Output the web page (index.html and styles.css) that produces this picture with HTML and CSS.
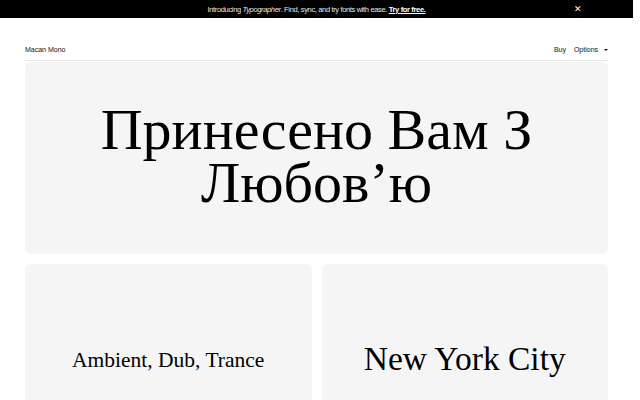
FILE: index.html
```html
<!DOCTYPE HTML>
<html>
    <head>
        <meta charset="utf-8">
        <link rel="stylesheet" href="styles.css">
    </head>
    <body>
        <div class="page">
            <div class="promo">
                <span class="promo-text">Introducing <em>Typographer</em>. Find, sync, and try fonts with ease. <a href="#">Try for free.</a></span>
                <span class="promo-close">&#x2715;</span>
            </div>
            <div class="wrap">
                <div class="topnav">
                    <span class="family">Macan Mono</span>
                    <span class="links">
                        <a href="#">Buy</a>
                        <a href="#" class="options">Options <span class="caret"></span></a>
                    </span>
                </div>
                <div class="hero">
                    <p class="hero-text"><span class="line">Принесено Вам З</span><span class="line">Любов’ю</span></p>
                </div>
                <div class="grid">
                    <div class="card"><p class="sample small">Ambient, Dub, Trance</p></div>
                    <div class="card"><p class="sample big">New York City</p></div>
                </div>
            </div>
        </div>
    </body>
</html>
```

FILE: styles.css
```css
body {
  margin: 0;
  font-family: "Liberation Sans", Arial, sans-serif;
  color: #111;
  background: #fff;
}

.page {
  margin-right: 7px;
}

/* announcement bar */
.promo {
  position: relative;
  height: 18px;
  background: #000;
  color: #e6e6e6;
  font-size: 7.5px;
  letter-spacing: -0.35px;
  display: flex;
  align-items: center;
  justify-content: center;
}
.promo a {
  color: #fff;
  font-weight: bold;
  text-decoration: underline;
}
.promo-close {
  position: absolute;
  right: 51px;
  top: 4px;
  font-size: 9px;
  color: #fff;
}

.wrap {
  padding: 0 25px;
}

.topnav {
  height: 43px;
  display: flex;
  justify-content: space-between;
  align-items: flex-end;
  padding-bottom: 7px;
  box-sizing: border-box;
  border-bottom: 1px solid #e8e8e8;
  font-size: 7px;
}
.links a {
  color: #111;
  text-decoration: none;
  margin-left: 6px;
}
.caret {
  display: inline-block;
  width: 0;
  height: 0;
  margin-left: 4px;
  vertical-align: 1px;
  border-left: 2px solid transparent;
  border-right: 2px solid transparent;
  border-top: 2px solid #111;
}

.hero, .card {
  background: #f5f5f5;
  border-radius: 6px;
  height: 192px;
  display: flex;
  align-items: center;
  justify-content: center;
}
.hero {
  margin-top: 1px;
}

.hero-text, .sample {
  margin: 0;
  font-family: "Liberation Serif", "Times New Roman", serif;
  color: #000;
  text-align: center;
}
.hero-text {
  font-size: 58px;
  margin-top: -4px;
}
.hero-text .line {
  display: block;
  height: 53px;
  line-height: 53px;
}

.grid {
  margin-top: 10px;
  display: grid;
  grid-template-columns: 1fr 1fr;
  gap: 10px;
}
.sample.small {
  font-size: 21.5px;
}
.sample.big {
  font-size: 33.5px;
  margin-top: -2px;
}
```
